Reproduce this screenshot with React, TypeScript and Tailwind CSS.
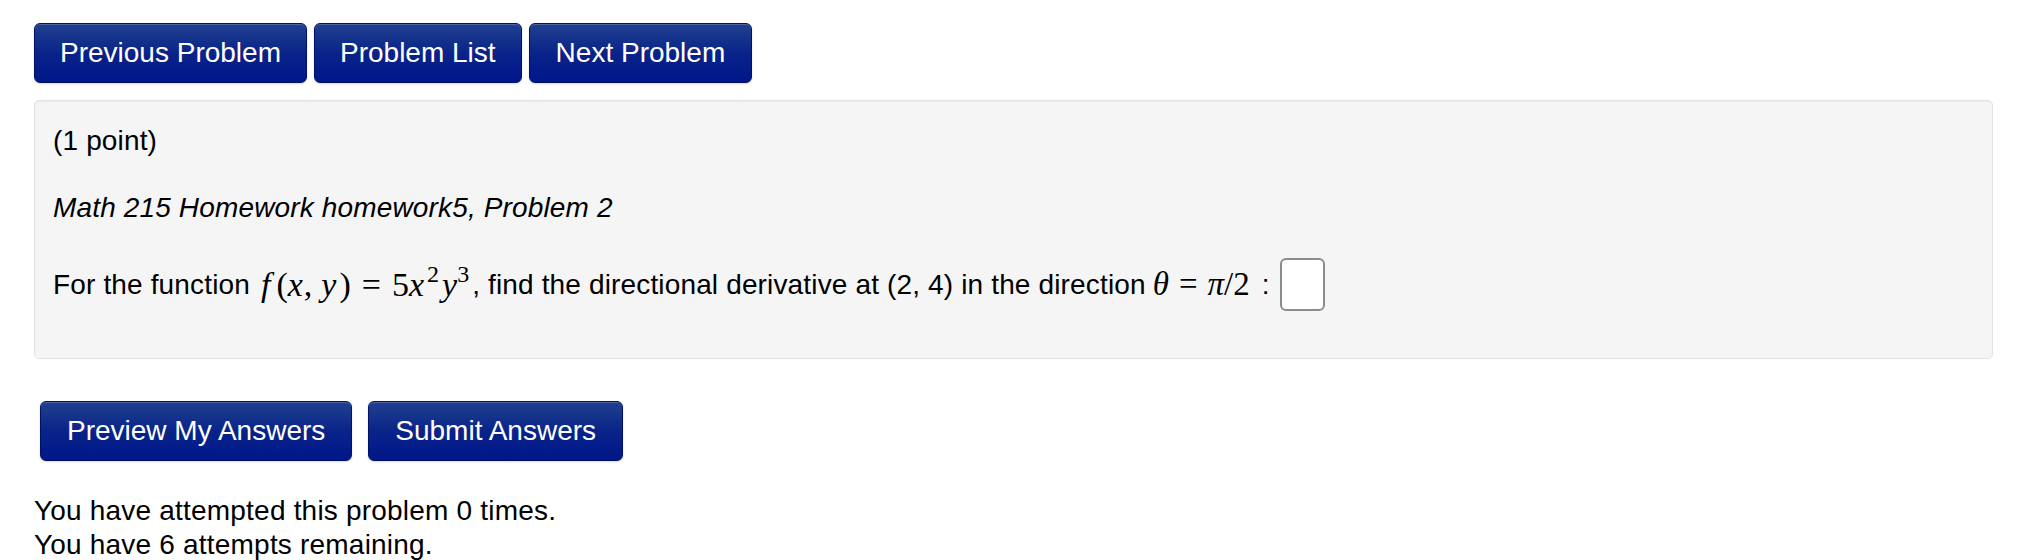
import React from 'react';

const sans = "font-['Liberation_Sans','Helvetica',Arial,sans-serif]";
const serif = "font-['Liberation_Serif','Times_New_Roman',serif]";

function NavButton({ label, tight }: { label: string; tight?: boolean }) {
  return (
    <button
      className={`${sans} h-[60px] ${tight ? 'px-[25px]' : 'px-[26px]'} rounded-[6px] border border-[#001266] bg-gradient-to-b from-[#213f8f] via-[#0a2389] to-[#00168a] text-white text-[28px] leading-none shadow-[inset_0_1px_0_rgba(255,255,255,0.2),0_1px_2px_rgba(0,0,0,0.15)]`}
    >
      {label}
    </button>
  );
}

// f(x, y) = 5x^2 y^3, spaced out a bit like MathJax does it
function MathF() {
  return (
    <span className={`${serif} text-[34px] ml-[11px] whitespace-nowrap tracking-normal`}>
      <i className="pr-[6px]">f</i>(<i className="pr-[1px]">x</i>,<span className="ml-[9px]" />
      <i className="pr-[3px]">y</i>)
      <span className="mx-[11px]">=</span>5<i className="pr-[3px]">x</i>
      <sup className="text-[24px] relative -top-[14px]">2</sup>
      <i className="ml-[3px]">y</i>
      <sup className="text-[24px] relative -top-[14px]">3</sup>
    </span>
  );
}

export default function App() {
  return (
    <div className={`${sans} bg-white text-black min-h-[560px] px-[34px] pt-[23px]`}>
      <div className="flex gap-[7px]">
        <NavButton label="Previous Problem" tight />
        <NavButton label="Problem List" tight />
        <NavButton label="Next Problem" />
      </div>

      <div className="mt-[17px] w-[1959px] h-[259px] rounded-[5px] border border-[#e3e3e3] bg-[#f5f5f5] shadow-[inset_0_1px_1px_rgba(0,0,0,0.05)] px-[18px] pt-[21px] text-[28px] tracking-[0.15px]">
        <p className="leading-[38px]">(1 point)</p>
        <p className="leading-[38px] italic mt-[29px]">Math 215 Homework homework5, Problem 2</p>
        <div className="mt-[30px] flex items-center h-[55px] whitespace-nowrap">
          <span>For the function</span>
          <MathF />
          <span className="ml-[3px]">, find the directional derivative at (2, 4) in the direction</span>
          <span className={`${serif} text-[33px] ml-[7px] mr-[12px] tracking-normal`}>
            <i>θ</i>
            <span className="mx-[10px]">=</span>
            <i>π</i>/2
          </span>
          <span>:</span>
          <input
            type="text"
            className="ml-[10px] w-[45px] h-[53px] rounded-[6px] border-2 border-[#8c8c8c] bg-white"
          />
        </div>
      </div>

      <div className="mt-[42px] ml-[6px] flex gap-[16px]">
        <NavButton label="Preview My Answers" />
        <NavButton label="Submit Answers" />
      </div>

      <div className="mt-[33px] text-[28px] leading-[34px] tracking-[0.2px]">
        <p>You have attempted this problem 0 times.</p>
        <p>You have 6 attempts remaining.</p>
      </div>
    </div>
  );
}
